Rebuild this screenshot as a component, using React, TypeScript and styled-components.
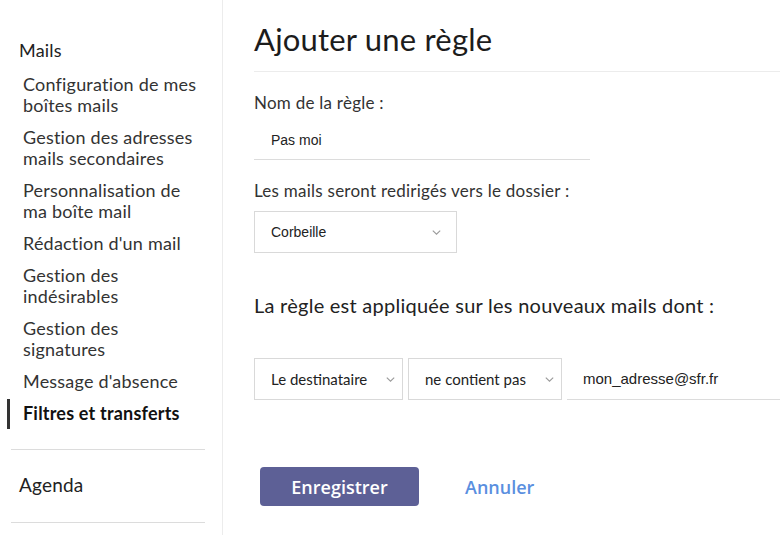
import styled, { createGlobalStyle } from "styled-components";

const GlobalStyle = createGlobalStyle`
  html, body {
    margin: 0;
    padding: 0;
    background: #ffffff;
  }
  body {
    font-family: Lato, "Open Sans", sans-serif;
    color: #222;
  }
`;

const menu = [
  { label: "Configuration de mes boîtes mails" },
  { label: "Gestion des adresses mails secondaires" },
  { label: "Personnalisation de ma boîte mail" },
  { label: "Rédaction d'un mail" },
  { label: "Gestion des indésirables" },
  { label: "Gestion des signatures" },
  { label: "Message d'absence" },
  { label: "Filtres et transferts", active: true },
];

const Chevron = () => (
  <svg width="9" height="5" viewBox="0 0 9 5" fill="none">
    <path d="M0.8 0.6l3.7 3.6 3.7-3.6" stroke="#9a9a9a" strokeWidth="1.1" />
  </svg>
);

export default function App() {
  return (
    <Page>
      <GlobalStyle />
      <Sidebar>
        <NavList>
          <SectionTitle>Mails</SectionTitle>
          {menu.map((m) => (
            <NavItem key={m.label} $active={!!m.active}>
              {m.label}
            </NavItem>
          ))}
        </NavList>
        <Separator />
        <AgendaTitle>Agenda</AgendaTitle>
        <Separator />
      </Sidebar>
      <Main>
        <Title>Ajouter une règle</Title>
        <Rule />
        <Label>Nom de la règle :</Label>
        <TextInput defaultValue="Pas moi" $width={336} />
        <Label>Les mails seront redirigés vers le dossier :</Label>
        <SelectBox $width={203} $arrowGap={15}>
          <SelectText $mono>Corbeille</SelectText>
          <Chevron />
        </SelectBox>
        <Subheading>La règle est appliquée sur les nouveaux mails dont :</Subheading>
        <ConditionRow>
          <SelectBox $width={149} $arrowGap={7}>
            <SelectText>Le destinataire</SelectText>
            <Chevron />
          </SelectBox>
          <SelectBox $width={154} $arrowGap={7}>
            <SelectText>ne contient pas</SelectText>
            <Chevron />
          </SelectBox>
          <ConditionInput defaultValue="mon_adresse@sfr.fr" />
        </ConditionRow>
        <Actions>
          <PrimaryButton>Enregistrer</PrimaryButton>
          <LinkButton>Annuler</LinkButton>
        </Actions>
      </Main>
    </Page>
  );
}

const Page = styled.div`
  display: flex;
  width: 780px;
  height: 535px;
  overflow: hidden;
`;

const Sidebar = styled.nav`
  width: 222px;
  flex-shrink: 0;
  border-right: 1px solid #ececec;
  padding-top: 38px;
`;

const NavList = styled.div`
  display: flex;
  flex-direction: column;
  gap: 2px;
`;

const SectionTitle = styled.div`
  font-size: 18px;
  line-height: 24px;
  letter-spacing: 0.2px;
  color: #222;
  padding-left: 19px;
  margin-bottom: 6px;
`;

const NavItem = styled.div<{ $active: boolean }>`
  margin-left: 7px;
  border-left: 3px solid ${(p) => (p.$active ? "#333" : "transparent")};
  padding: 4px 20px 5px 13px;
  font-size: 18px;
  line-height: 21px;
  letter-spacing: 0.2px;
  color: ${(p) => (p.$active ? "#111" : "#333")};
  font-weight: ${(p) => (p.$active ? 700 : 400)};
`;

const Separator = styled.div`
  height: 1px;
  background: #dcdcdc;
  margin: 20px 17px 0 11px;
`;

const AgendaTitle = styled.div`
  font-size: 19px;
  line-height: 24px;
  letter-spacing: 0.2px;
  padding: 23px 0 5px 19px;
  color: #222;
`;

const Main = styled.main`
  flex: 1;
  padding: 20px 0 0 31px;
  display: flex;
  flex-direction: column;
  align-items: flex-start;
`;

const Title = styled.h1`
  margin: 0;
  font-size: 31px;
  font-weight: 400;
  line-height: 38px;
  letter-spacing: 0.2px;
  color: #1c1c1c;
`;

const Rule = styled.div`
  align-self: stretch;
  height: 1px;
  background: #ececec;
  margin-top: 13px;
`;

const Label = styled.div`
  margin-top: 20px;
  font-size: 17px;
  line-height: 22px;
  letter-spacing: 0.25px;
  color: #333;
`;

const TextInput = styled.input<{ $width: number }>`
  width: ${(p) => p.$width}px;
  box-sizing: border-box;
  height: 42px;
  margin-top: 4px;
  padding: 2px 0 0 17px;
  border: none;
  border-bottom: 1px solid #dcdcdc;
  font-family: "Liberation Sans", Arial, sans-serif;
  font-size: 14px;
  color: #222;
  outline: none;
  background: transparent;
`;

const SelectBox = styled.div<{ $width: number; $arrowGap: number }>`
  width: ${(p) => p.$width}px;
  height: 42px;
  box-sizing: border-box;
  border: 1px solid #d9d9d9;
  display: flex;
  align-items: center;
  justify-content: space-between;
  padding: 0 ${(p) => p.$arrowGap}px 0 16px;
  background: #fff;
  flex-shrink: 0;
  margin-top: 9px;
`;

const SelectText = styled.span<{ $mono?: boolean }>`
  font-family: ${(p) =>
    p.$mono ? `"Liberation Sans", Arial, sans-serif` : `Lato, sans-serif`};
  font-size: ${(p) => (p.$mono ? 14 : 15)}px;
  color: #222;
`;

const Subheading = styled.div`
  margin-top: 40px;
  font-size: 20px;
  line-height: 24px;
  letter-spacing: 0.25px;
  color: #222;
`;

const ConditionRow = styled.div`
  align-self: stretch;
  display: flex;
  gap: 5px;
  margin-top: 41px;

  ${SelectBox} {
    margin-top: 0;
  }
`;

const ConditionInput = styled.input`
  flex: 1;
  min-width: 0;
  height: 42px;
  box-sizing: border-box;
  border: none;
  border-bottom: 1px solid #dcdcdc;
  padding: 0 0 0 16px;
  font-family: "Liberation Sans", Arial, sans-serif;
  font-size: 15px;
  color: #222;
  outline: none;
  background: transparent;
`;

const Actions = styled.div`
  display: flex;
  align-items: center;
  gap: 46px;
  margin: 67px 0 0 6px;
`;

const PrimaryButton = styled.button`
  width: 159px;
  height: 39px;
  border: none;
  border-radius: 4px;
  background: #5d6096;
  color: #fff;
  font-family: "Open Sans", sans-serif;
  font-weight: 600;
  font-size: 18px;
  cursor: pointer;
`;

const LinkButton = styled.button`
  border: none;
  background: none;
  padding: 0;
  color: #5a8fdf;
  font-family: "Open Sans", sans-serif;
  font-weight: 600;
  font-size: 18px;
  cursor: pointer;
`;
